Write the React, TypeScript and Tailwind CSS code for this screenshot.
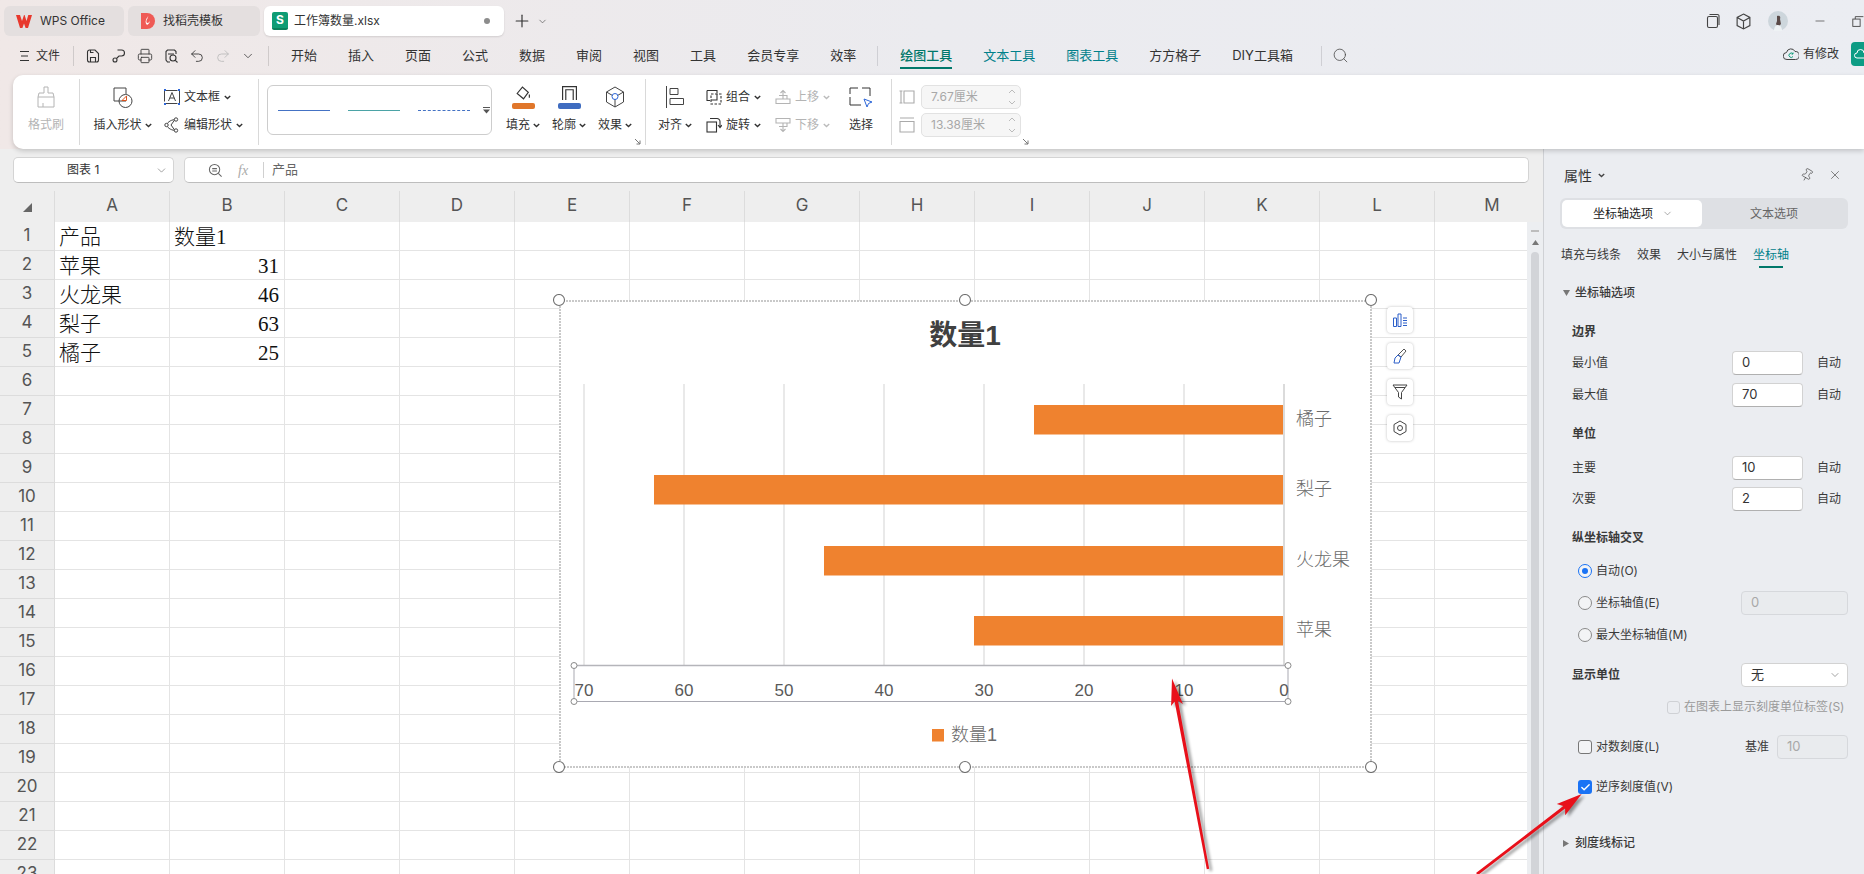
import { Check, ChevronDown, Minus, Pin, Plus, Printer, Redo2, Search, Undo2, X } from "lucide-react";
import type { ReactNode } from "react";

const menus = ["开始", "插入", "页面", "公式", "数据", "审阅", "视图", "工具", "会员专享", "效率"];
const cols = ["A", "B", "C", "D", "E", "F", "G", "H", "I", "J", "K", "L", "M"];
const cells: Record<number, [string, string]> = {
  1: ["产品", "数量1"],
  2: ["苹果", "31"],
  3: ["火龙果", "46"],
  4: ["梨子", "63"],
  5: ["橘子", "25"],
};
const bars = [
  { name: "橘子", value: 25, y: 405 },
  { name: "梨子", value: 63, y: 475 },
  { name: "火龙果", value: 46, y: 546 },
  { name: "苹果", value: 31, y: 616 },
];
const ticks = [70, 60, 50, 40, 30, 20, 10, 0];

function Caret({ className = "text-[#333]" }: { className?: string }) {
  return (
    <svg width="7" height="5" viewBox="0 0 7 5" className={`shrink-0 ${className}`} fill="none" stroke="currentColor" strokeWidth="1.4">
      <path d="M.8 1l2.7 2.6L6.2 1" />
    </svg>
  );
}

function Ico({ children, size = 16, className = "" }: { children: ReactNode; size?: number; className?: string }) {
  return (
    <svg width={size} height={size} viewBox="0 0 16 16" fill="none" stroke="currentColor" strokeWidth="1.1" className={`shrink-0 ${className}`}>
      {children}
    </svg>
  );
}

function Launcher({ className }: { className: string }) {
  return (
    <svg width="7" height="7" viewBox="0 0 7 7" fill="none" stroke="#777" className={`absolute ${className}`}>
      <path d="M1 1l5 5M2.5 6H6V2.5" />
    </svg>
  );
}

function TitleBar() {
  return (
    <div className="flex h-[42px] items-start gap-1 pl-1 pt-[6px] text-[12px] text-[#333]">
      <div className="flex h-[30px] w-[120px] items-center gap-[8px] rounded-[6px] bg-[#e4dfdf] pl-[12px]">
        <svg width="16" height="13" viewBox="0 0 16 13" fill="#e8382d"><path d="M0 0h4l2 6 2-6h.6L10.5 6 12.3 0H16l-4 13H9.6L8 8.4 6.4 13H4z" /></svg>
        <span>WPS Office</span>
      </div>
      <div className="flex h-[30px] w-[132px] items-center gap-[8px] rounded-[6px] bg-[#e4dfdf] pl-[13px]">
        <svg width="14" height="16" viewBox="0 0 14 16"><path d="M0 0h6a8 8 0 0 1 8 8 8 8 0 0 1-8 8H0z" fill="#ef5a55" /><path d="M7 3c1 2-3 4-1 7 2 0 3-2 3-3 0 2-1 4-3 5-1-1-2-3-1-5 0-2 2-2 2-4z" fill="#fff" /></svg>
        <span>找稻壳模板</span>
      </div>
      <div className="flex h-[30px] w-[240px] items-center rounded-[6px] bg-white pl-[8px] shadow-[0_1px_2px_rgba(0,0,0,0.12)]">
        <div className="flex h-[18px] w-[16px] items-center justify-center rounded-[2px] border-b-2 border-[#0b7f5a] bg-[#0e9c74] text-[12px] font-bold text-white">S</div>
        <span className="ml-[6px] flex-1">工作簿数量.xlsx</span>
        <span className="mr-[14px] h-[6px] w-[6px] rounded-full bg-[#8c8c8c]" />
      </div>
      <Plus size={20} strokeWidth={1.4} className="ml-[4px] mt-[5px] text-[#333]" />
      <ChevronDown size={11} strokeWidth={1.5} className="ml-[1px] mt-[10px] text-[#555]" />
      <div className="ml-auto flex h-[30px] items-center pr-0 text-[#444]">
        <Ico size={16}><rect x="2.5" y="3.5" width="10" height="11" rx="1.5" /><path d="M4.5 1.5h8a1.5 1.5 0 0 1 1.5 1.5v9" /></Ico>
        <Ico size={17} className="ml-[14px]"><path d="M8 1l6 3.200v7.600L8 15l-6-3.200V4.200z M2 4.200l6 3.400 6-3.400M8 7.600V15" /></Ico>
        <svg width="20" height="20" viewBox="0 0 20 20" className="ml-[16px]">
          <circle cx="10" cy="10" r="10" fill="#cdd6dc" />
          <path d="M9 5c2-1 4 0 3 3l1 5-3 3-2-3 1-3z" fill="#5a4a48" />
          <path d="M6 20c0-4 2-6 4-6s4 2 4 6z" fill="#eef2f4" />
        </svg>
        <Minus size={14} strokeWidth={1.2} className="ml-[25px]" />
        <Ico size={13} className="ml-[25px] mr-[-1px]"><rect x="1" y="5" width="9" height="9" /><path d="M4 5V2h10" /></Ico>
      </div>
    </div>
  );
}

function MenuBar() {
  return (
    <div className="flex h-[33px] items-start text-[13px] text-[#333]">
      <div className="flex h-[28px] items-center">
        <svg width="9" height="10" viewBox="0 0 9 10" className="ml-[20px]" stroke="#333"><path d="M0 .5h9M1 5h7M0 9.500h9" /></svg>
        <span className="ml-[7px] w-[37px] text-[12px]">文件</span>
        <span className="h-[20px] w-px bg-[#cfcaca]" />
        <div className="ml-[11px] flex items-center gap-[10px] text-[#333]">
          <Ico><path d="M2.500 4a2 2 0 0 1 2-2H10l3.500 3.500V12a2 2 0 0 1-2 2h-7a2 2 0 0 1-2-2z" /><path d="M5.500 14V9.500h5V14M5.500 2v2.500h3" /></Ico>
          <Ico><circle cx="4" cy="12" r="2" /><path d="M5.500 10.500L8 8h2.500a3 3 0 0 0 0-6H6.500" /></Ico>
          <Printer size={16} strokeWidth={1.3} />
          <Ico><path d="M13 6V3.500L11.500 2h-7L3 3.500V12l1.500 2H7" /><circle cx="10" cy="10" r="3" /><path d="M12.300 12.300L14.500 14.500M5 6h6" /></Ico>
          <Undo2 size={16} strokeWidth={1.3} />
          <Redo2 size={16} strokeWidth={1.3} className="text-[#bbb]" />
          <ChevronDown size={14} strokeWidth={1.3} />
        </div>
        <span className="ml-[13px] h-[20px] w-px bg-[#cfcaca]" />
      </div>
      <div className="ml-[22px] flex h-[28px] items-center gap-[31px]">
        {menus.map((m) => <span key={m}>{m}</span>)}
      </div>
      <span className="ml-[21px] mt-[4px] h-[20px] w-px bg-[#cfcfd4]" />
      <div className="ml-[22px] flex h-[28px] items-center gap-[31px]">
        <span className="relative font-medium text-[#00786a]">
          绘图工具
          <span className="absolute left-0 right-0 top-[21px] h-[2px] bg-[#00786a]" />
        </span>
        <span className="text-[#00808a]">文本工具</span>
        <span className="text-[#00808a]">图表工具</span>
        <span>方方格子</span>
        <span>DIY工具箱</span>
      </div>
      <span className="ml-[28px] mt-[4px] h-[20px] w-px bg-[#cfcfd4]" />
      <Search size={17} strokeWidth={1.1} className="ml-[10px] mt-[5px] text-[#444]" />
      <div className="ml-auto flex h-[24px] items-center text-[12px]">
        <svg width="16" height="14" viewBox="0 0 16 14" fill="none" stroke="#444" className="mr-[4px]"><path d="M4 12.500a3.500 3.500 0 0 1-.5-7A4.500 4.500 0 0 1 12 4.500a4 4 0 0 1 .5 8z" /><path d="M10 7a2.200 2.200 0 1 0 0 2.500M10 5.500V7H8.500" stroke="#0f9b78" /></svg>
        <span className="w-[36px] whitespace-nowrap">有修改</span>
        <div className="ml-[12px] h-[24px] w-[13px] rounded-l-[4px] bg-[#0d9c84] pl-[3px] pt-[7px]">
          <svg width="10" height="10" viewBox="0 0 10 10" fill="none" stroke="#fff"><path d="M10 9H3a2.500 2.500 0 0 1 0-5 3.500 3.500 0 0 1 7 0" /></svg>
        </div>
      </div>
    </div>
  );
}

function RibbonSep() {
  return <span className="mt-1 h-[66px] w-px shrink-0 bg-[#d9d9d9]" />;
}

function Tool({ icon, label, muted = false, caret = true }: { icon: ReactNode; label: string; muted?: boolean; caret?: boolean }) {
  return (
    <div className={`flex h-5 items-center ${muted ? "text-[#b4b4b4]" : "text-[#333]"}`}>
      {icon}
      <span className="ml-1 whitespace-nowrap">{label}</span>
      {caret && <Caret className={`ml-[4px] ${muted ? "text-[#bbb]" : "text-[#333]"}`} />}
    </div>
  );
}

function SizeField({ value, icon }: { value: string; icon: ReactNode }) {
  return (
    <div className="flex h-5 items-center">
      {icon}
      <div className="-my-0.5 ml-[6px] flex h-6 w-[100px] items-center justify-between rounded-[5px] border border-[#e2e2e2] bg-[#f6f6f6] pl-[9px] pr-[4px] text-[#a8a8a8]">
        <span>{value}</span>
        <svg width="8" height="18" viewBox="0 0 8 18" fill="none" stroke="#bbb"><path d="M1 5l3-3 3 3M1 13l3 3 3-3" /></svg>
      </div>
    </div>
  );
}

function Ribbon() {
  return (
    <div className="relative z-10 ml-[13px] flex h-[74px] rounded-l-[10px] bg-white text-[12px] shadow-[0_2px_5px_rgba(0,0,0,0.18)]">
      <div className="flex w-[66px] shrink-0 flex-col items-center gap-2 pt-3 text-[#b4b4b4]">
        <div className="flex h-5 items-center">
          <svg width="20" height="22" viewBox="0 0 20 22" fill="none" stroke="#b4b4b4"><path d="M8 1h4v6h5l1 4v10H2V11l1-4h5zM2 11h16M7 21v-4" /></svg>
        </div>
        <span className="flex h-5 items-center">格式刷</span>
      </div>
      <RibbonSep />
      <div className="flex w-[178px] shrink-0 gap-3 pl-[13px] pt-3">
        <div className="flex w-[59px] flex-col items-center gap-2">
          <div className="flex h-5 items-center">
            <svg width="20" height="24" viewBox="0 0 20 24" fill="none" stroke="#444">
              <path d="M13 16H1V3h12v6" /><circle cx="12.500" cy="16" r="6.500" />
              <path d="M9 15.500L13.500 11v4.500z" stroke="#d9541e" fill="#fff" />
            </svg>
          </div>
          <div className="flex h-5 items-center whitespace-nowrap text-[#333]">插入形状<Caret className="ml-[3px] text-[#333]" /></div>
        </div>
        <div className="flex flex-col gap-2">
          <Tool label="文本框" icon={
            <svg width="16" height="16" viewBox="0 0 16 16" fill="none" stroke="#444">
              <rect x=".5" y="1.500" width="15" height="13" strokeDasharray="13 2" />
              <path d="M4.500 12L8 3.500 11.500 12M5.800 9h4.400" />
              <path d="M0 0h2v2H0zM14 0h2v2h-2zM0 14h2v2H0zM14 14h2v2h-2z" fill="#2c66d8" stroke="none" />
            </svg>} />
          <Tool label="编辑形状" icon={
            <svg width="16" height="16" viewBox="0 0 16 16" fill="none" stroke="#444">
              <path d="M11 2.500C6 3 3 6 2.500 8c.5 2 3.500 5 8.500 5.500M11 2.500L7 8l4 5.500" />
              <circle cx="12" cy="2.500" r="1.700" fill="#fff" /><circle cx="2.500" cy="8" r="1.700" fill="#fff" /><circle cx="12" cy="13.500" r="1.700" fill="#fff" />
            </svg>} />
        </div>
      </div>
      <RibbonSep />
      <div className="ml-[8px] mt-[10px] flex h-[50px] w-[225px] shrink-0 items-center rounded-[6px] border border-[#cdcdcd] pl-[10px]">
        <span className="h-px w-[52px] bg-[#4472c4]" />
        <span className="ml-[18px] h-px w-[52px] bg-[#4ba3a6]" />
        <span className="ml-[18px] w-[52px] border-t border-dashed border-[#4472c4]" />
        <svg width="7" height="7" viewBox="0 0 7 7" className="ml-[13px]" fill="#555"><path d="M0 0h7v1H0zM0 2.500h7L3.500 6.500z" /></svg>
      </div>
      <div className="relative ml-[13px] flex w-[140px] shrink-0 gap-[10px] pt-3 text-[#333]">
        <div className="flex w-[36px] flex-col items-center gap-2">
          <div className="flex h-5 flex-col items-center">
            <Ico size={17} className="-mt-[2px]"><path d="M2 8l5-6 5.500 5-4.500 6zM13.500 9v3" /></Ico>
            <span className="mt-[1px] h-[6px] w-[23px] shrink-0 rounded-[2px] bg-[#e0762a]" />
          </div>
          <div className="flex h-5 items-center whitespace-nowrap">填充<Caret className="ml-[3px]" /></div>
        </div>
        <div className="flex w-[36px] flex-col items-center gap-2">
          <div className="flex h-5 flex-col items-center">
            <Ico size={17} className="-mt-[2px]"><path d="M1.500 14V1.500h13V14M4.500 14V4.500h7V14" /></Ico>
            <span className="mt-[1px] h-[6px] w-[23px] shrink-0 rounded-[2px] bg-[#3f6cc0]" />
          </div>
          <div className="flex h-5 items-center whitespace-nowrap">轮廓<Caret className="ml-[3px]" /></div>
        </div>
        <div className="flex w-[36px] flex-col items-center gap-2">
          <div className="flex h-5 items-center">
            <svg width="20" height="22" viewBox="0 0 20 22" fill="none" stroke="#444">
              <path d="M10 1l8.500 5v10L10 21l-8.500-5V6zM1.500 6l6 3.500M18.500 6l-6 3.500M10 13v8" />
              <circle cx="10" cy="10.500" r="3" stroke="#2c66d8" />
            </svg>
          </div>
          <div className="flex h-5 items-center whitespace-nowrap">效果<Caret className="ml-[3px]" /></div>
        </div>
        <Launcher className="bottom-[4px] right-[4px]" />
      </div>
      <RibbonSep />
      <div className="ml-3 flex w-[34px] shrink-0 flex-col items-center gap-2 pt-3 text-[#333]">
        <div className="flex h-5 items-center">
          <svg width="18" height="22" viewBox="0 0 18 22" fill="none" stroke="#444"><path d="M.5 0v22M4 2.500h8v6H4zM4 12.500h13.500v6H4z" /></svg>
        </div>
        <div className="flex h-5 items-center whitespace-nowrap">对齐<Caret className="ml-[3px]" /></div>
      </div>
      <div className="ml-[14px] flex shrink-0 flex-col gap-2 pt-3">
        <Tool label="组合" icon={<Ico><path d="M1 1.500h10v3M1 1.500v10h3" /><rect x="5" y="5" width="10" height="10" strokeDasharray="2.500 1.500" /><path d="M5 11h6V5" /></Ico>} />
        <Tool label="旋转" icon={<Ico><rect x="1" y="5" width="9.500" height="10" /><path d="M4 1.500h7a3 3 0 0 1 3 3V10M12 8l2 2.500L16 8" /></Ico>} />
      </div>
      <div className="ml-[14px] flex shrink-0 flex-col gap-2 pt-3">
        <Tool muted label="上移" icon={<Ico><path d="M8 10V1.500M5.500 4L8 1.500 10.500 4M4 6.500h8v3.500H4M1 10h14v4.500H1z" /></Ico>} />
        <Tool muted label="下移" icon={<Ico><path d="M8 6v8.500M5.500 12L8 14.500 10.500 12M4 9.500h8V6H4M1 6h14V1.500H1z" /></Ico>} />
      </div>
      <div className="ml-[19px] flex w-[24px] shrink-0 flex-col items-center gap-2 pt-3 text-[#333]">
        <div className="flex h-5 items-center">
          <svg width="24" height="22" viewBox="0 0 24 22" fill="none" stroke="#333">
            <path d="M9 2H1v6M13 2h8v8M1 11v8h11" /><path d="M15 13l8 3-3.500 1.500L18 21z" stroke="#2c66d8" fill="#fff" />
          </svg>
        </div>
        <span className="flex h-5 items-center whitespace-nowrap">选择</span>
      </div>
      <span className="ml-[18px] mt-1 h-[66px] w-px shrink-0 bg-[#d9d9d9]" />
      <div className="relative ml-[7px] flex w-[135px] shrink-0 flex-col gap-2 pt-3">
        <SizeField value="7.67厘米" icon={<Ico className="text-[#aaa]"><path d="M.5 2h3M2 2v12M.5 14h3M5 2h10v12H5z" /></Ico>} />
        <SizeField value="13.38厘米" icon={<Ico className="text-[#aaa]"><path d="M1 1h14M1 4.500h14V15H1z" /></Ico>} />
        <Launcher className="bottom-[4px] left-[123px]" />
      </div>
    </div>
  );
}

function Chart() {
  return (
    <svg width="824" height="479" viewBox="553 294 824 479" className="absolute left-[553px] top-[103px] font-['Liberation_Sans','Noto_Sans_CJK_SC',sans-serif]">
      <rect x="560" y="301" width="811" height="466" fill="#fff" stroke="#c9c9c9" strokeWidth="2" strokeDasharray="2 1" />
      <text x="965" y="335" textAnchor="middle" dominantBaseline="central" fontSize="28" fontWeight="700" fill="#404040">数量1</text>
      {ticks.slice(0, 7).map((t) => (
        <line key={t} x1={1284 - t * 10} x2={1284 - t * 10} y1="384" y2="665" stroke="#e2e2e2" strokeWidth="1.500" />
      ))}
      {bars.map((b) => (
        <g key={b.name}>
          <rect x={1284 - b.value * 10} y={b.y} width={b.value * 10 - 1} height="29.500" fill="#ef822f" />
          <text x="1296" y={b.y + 14} dominantBaseline="central" fontSize="18" fontWeight="300" fill="#6b6b6b">{b.name}</text>
        </g>
      ))}
      <line x1="1284" x2="1284" y1="384" y2="665" stroke="#cfcfcf" strokeWidth="1.500" />
      <rect x="574" y="665.500" width="714" height="36" fill="none" stroke="#a9a9b2" />
      <line x1="574" x2="1288" y1="665.500" y2="665.500" stroke="#b5b5ba" strokeWidth="1.500" />
      {ticks.map((t) => (
        <text key={t} x={1284 - t * 10} y="690" textAnchor="middle" dominantBaseline="central" fontSize="17" fill="#595959">{t}</text>
      ))}
      {[[574, 665.5], [1288, 665.5], [574, 701.5], [1288, 701.5]].map(([cx, cy]) => (
        <circle key={`${cx}-${cy}`} cx={cx} cy={cy} r="3" fill="#fff" stroke="#8a8a8a" />
      ))}
      <rect x="932" y="729" width="12" height="12.500" fill="#ef822f" />
      <text x="951" y="735" dominantBaseline="central" fontSize="18" fontWeight="300" fill="#6b6b6b">数量1</text>
      {[559, 965, 1371].flatMap((cx) => [300, 767].map((cy) => (
        <circle key={`${cx}-${cy}`} cx={cx} cy={cy} r="5.500" fill="#fff" stroke="#707070" strokeWidth="1.100" />
      )))}
    </svg>
  );
}

function ChartButtons() {
  const box = "flex h-[26px] w-[26px] items-center justify-center rounded-[4px] bg-white shadow-[0_0_3px_rgba(0,0,0,0.25)]";
  return (
    <div className="absolute left-[1387px] top-[116px] flex flex-col gap-[10px]">
      <div className={box}>
        <svg width="14" height="14" viewBox="0 0 14 14" fill="none" stroke="#2c5fc9"><path d="M.5 5h3v8.500h-3zM5 1h3v12.500H5zM10 5h4M10 7.500h4M10 10h4M10 12.500h4" /></svg>
      </div>
      <div className={box}>
        <svg width="14" height="16" viewBox="0 0 14 16" fill="none" stroke="#2c5fc9"><path d="M11 1l2 2-5 6-3-2z" stroke="#555" /><path d="M5 7l3 2-2 6H1l1-5z" /></svg>
      </div>
      <div className={box}>
        <svg width="16" height="16" viewBox="0 0 16 16" fill="none" stroke="#444"><path d="M1 1h14L9.500 8.500V15L6.500 13V8.500zM3 3.500h10" /></svg>
      </div>
      <div className={box}>
        <svg width="14" height="16" viewBox="0 0 14 16" fill="none" stroke="#444"><path d="M7 1l6 3.500v7L7 15l-6-3.500v-7z" /><circle cx="7" cy="8" r="2.500" /></svg>
      </div>
    </div>
  );
}

function Sheet() {
  return (
    <div className="relative min-h-0 flex-1 overflow-hidden">
      <div className="flex h-[31px] overflow-hidden bg-[#eeeeee] font-['Inter',sans-serif] text-[17px] text-[#555]">
        <div className="flex w-[55px] shrink-0 items-center justify-center border-r border-[#dcdcdc] pt-[2px]">
          <svg width="9" height="9" viewBox="0 0 9 9" fill="#666"><path d="M9 0v9H0z" /></svg>
        </div>
        {cols.map((c) => (
          <div key={c} className="flex w-[115px] shrink-0 items-center justify-center border-r border-[#dcdcdc] pb-[1px]">{c}</div>
        ))}
      </div>
      <div className="flex">
        <div className="min-w-0 flex-1 overflow-hidden">
          {Array.from({ length: 23 }, (_, i) => i + 1).map((r) => (
            <div key={r} className="flex h-[29px]">
              <div className="flex w-[55px] shrink-0 items-center justify-center border-b border-r border-[#dcdcdc] bg-[#eeeeee] font-['Inter',sans-serif] text-[17px] text-[#555]">{r}</div>
              {cols.map((c, i) => {
                const v = cells[r]?.[i];
                const numeric = r > 1 && i === 1;
                return (
                  <div key={c} className={`h-[29px] w-[115px] shrink-0 whitespace-nowrap border-b border-r border-[#e4e4e4] bg-white pt-[1px] font-['Liberation_Serif','Noto_Sans_CJK_SC',serif] text-[21px] font-light leading-[28px] text-[#111] ${numeric ? "pr-[5px] text-right" : "pl-[4px]"}`}>
                    {v}
                  </div>
                );
              })}
            </div>
          ))}
        </div>
        <div className="flex w-[16px] shrink-0 flex-col items-center bg-[#eceef1] pt-[8px]">
          <span className="h-[1.500px] w-[8px] bg-[#bdbdbd]" />
          <svg width="7" height="5" viewBox="0 0 7 5" fill="#777" className="mt-[8px]"><path d="M3.500 0L7 5H0z" /></svg>
          <span className="mt-[7px] h-[700px] w-[8px] rounded-t-[4px] bg-[#d2d4d8]" />
        </div>
      </div>
      <Chart />
      <ChartButtons />
    </div>
  );
}

function Field({ value, disabled = false, className = "w-[71px]" }: { value: string; disabled?: boolean; className?: string }) {
  return (
    <div className={`flex h-[24px] shrink-0 items-center rounded-[4px] border pl-[9px] text-[13px] ${className} ${disabled ? "border-[#d6d8dc] bg-[#e9ebee] text-[#a8a8a8]" : "border-[#d2d2d2] border-b-[#b0b0b0] bg-white text-[#333]"}`}>
      {value}
    </div>
  );
}

function Bound({ label, value, className }: { label: string; value: string; className: string }) {
  return (
    <div className={`ml-[28px] flex h-[24px] items-center ${className}`}>
      <span className="w-[160px] shrink-0">{label}</span>
      <Field value={value} />
      <span className="ml-[14px]">自动</span>
    </div>
  );
}

function Radio({ label, checked = false, children, className }: { label: string; checked?: boolean; children?: ReactNode; className: string }) {
  return (
    <div className={`ml-[34px] flex h-[24px] items-center ${className}`}>
      <span className={`flex h-[14px] w-[14px] shrink-0 items-center justify-center rounded-full border bg-white/40 ${checked ? "border-[#1a73f5]" : "border-[#8a8a8a]"}`}>
        {checked && <span className="h-[6px] w-[6px] rounded-full bg-[#1a73f5]" />}
      </span>
      <span className="ml-[4px] whitespace-nowrap">{label}</span>
      {children}
    </div>
  );
}

function Panel() {
  return (
    <div className="flex w-[321px] shrink-0 flex-col border-l border-[#cfd1d5] bg-[#ebedf1] text-[12px] text-[#3a3a3a]">
      <div className="flex h-[49px] shrink-0 items-center pl-[20px] pr-[22px] pt-[3px]">
        <span className="text-[14px] text-[#333]">属性</span>
        <Caret className="ml-[6px] text-[#444]" />
        <Pin size={14} strokeWidth={1.1} className="ml-auto rotate-[30deg] text-[#444]" />
        <X size={14} strokeWidth={1.1} className="ml-[14px] text-[#444]" />
      </div>
      <div className="ml-[16px] flex h-[31px] w-[288px] shrink-0 rounded-[6px] bg-[#dee0e4] p-[2px]">
        <div className="flex h-[27px] w-[140px] items-center justify-center gap-[9px] rounded-[5px] bg-white pl-[2px] text-[#222]">
          坐标轴选项
          <ChevronDown size={11} strokeWidth={1.2} className="text-[#666]" />
        </div>
        <div className="flex flex-1 items-center justify-center text-[#666]">文本选项</div>
      </div>
      <div className="ml-[17px] flex h-[39px] shrink-0 items-start gap-4 pt-[17px] leading-[18px]">
        <span>填充与线条</span>
        <span>效果</span>
        <span>大小与属性</span>
        <span className="relative text-[#00808a]">
          坐标轴
          <span className="absolute left-[6px] top-[20px] h-[2px] w-[24px] bg-[#00786a]" />
        </span>
      </div>
      <div className="ml-[19px] mt-[16px] flex h-[18px] items-center">
        <svg width="7" height="6" viewBox="0 0 7 6" fill="#777"><path d="M0 0h7L3.500 6z" /></svg>
        <span className="ml-[5px] font-medium">坐标轴选项</span>
      </div>
      <div className="ml-[28px] mt-[21px] h-[18px] font-bold leading-[18px]">边界</div>
      <Bound label="最小值" value="0" className="mt-[10px]" />
      <Bound label="最大值" value="70" className="mt-[8px]" />
      <div className="ml-[28px] mt-[18px] h-[18px] font-bold leading-[18px]">单位</div>
      <Bound label="主要" value="10" className="mt-[13px]" />
      <Bound label="次要" value="2" className="mt-[7px]" />
      <div className="ml-[28px] mt-[18px] h-[18px] font-bold leading-[18px]">纵坐标轴交叉</div>
      <Radio label="自动(O)" checked className="mt-[12px]" />
      <Radio label="坐标轴值(E)" className="mt-[8px]">
        <Field value="0" disabled className="ml-auto mr-[16px] w-[107px]" />
      </Radio>
      <Radio label="最大坐标轴值(M)" className="mt-[8px]" />
      <div className="ml-[28px] mt-[16px] flex h-[24px] items-center pr-[16px]">
        <span className="font-bold">显示单位</span>
        <div className="ml-auto flex h-[24px] w-[107px] items-center justify-between rounded-[4px] border border-[#d2d2d2] bg-white pl-[9px] pr-[6px] text-[13px] text-[#333]">
          无
          <ChevronDown size={12} strokeWidth={1.1} className="text-[#555]" />
        </div>
      </div>
      <div className="ml-[123px] mt-[11px] flex h-[18px] items-center whitespace-nowrap text-[#9a9a9a]">
        <span className="h-[13px] w-[13px] shrink-0 rounded-[3px] border border-[#cfd1d5]" />
        <span className="ml-[4px]">在图表上显示刻度单位标签(S)</span>
      </div>
      <div className="ml-[34px] mt-[19px] flex h-[24px] items-center pr-[16px]">
        <span className="h-[14px] w-[14px] shrink-0 rounded-[3px] border border-[#777] bg-white/40" />
        <span className="ml-[4px]">对数刻度(L)</span>
        <span className="ml-auto">基准</span>
        <Field value="10" disabled className="ml-[8px] w-[71px]" />
      </div>
      <div className="ml-[34px] mt-[16px] flex h-[24px] items-center">
        <span className="flex h-[14px] w-[14px] shrink-0 items-center justify-center rounded-[3px] bg-[#1a73f5]">
          <Check size={11} strokeWidth={3} className="text-white" />
        </span>
        <span className="ml-[4px]">逆序刻度值(V)</span>
      </div>
      <div className="ml-[19px] mt-[35px] flex h-[18px] items-center">
        <svg width="6" height="7" viewBox="0 0 6 7" fill="#777"><path d="M0 0l6 3.500L0 7z" /></svg>
        <span className="ml-[6px] font-medium">刻度线标记</span>
      </div>
    </div>
  );
}

function Arrows() {
  const one = "1172,678.500 1182.900,703.900 1178,700.800 1209.200,868.800 1206.800,869.200 1174.600,701.400 1171.100,706.100";
  const two = "1581.700,794 1565.200,815.300 1565.100,808.500 1478,875 1476,873 1563.300,806.100 1556.800,804.100";
  return (
    <svg width="1864" height="874" viewBox="0 0 1864 874" className="pointer-events-none absolute left-0 top-0 z-20">
      <defs>
        <filter id="soft" x="-20%" y="-20%" width="140%" height="140%"><feGaussianBlur stdDeviation="1.500" /></filter>
      </defs>
      <g fill="#000" opacity="0.4" filter="url(#soft)" transform="translate(3 2)">
        <polygon points={one} />
        <polygon points={two} />
      </g>
      <g fill="#e8101a">
        <polygon points={one} />
        <polygon points={two} />
      </g>
    </svg>
  );
}

export default function App() {
  return (
    <div className="relative flex h-[874px] w-[1864px] flex-col overflow-hidden bg-[#eeeeee] font-['Inter','Noto_Sans_CJK_SC',sans-serif]">
      <div className="shrink-0 bg-linear-to-r from-[#f0e8e7] via-[#ebebef] to-[#ebedf2]">
        <TitleBar />
        <MenuBar />
        <Ribbon />
      </div>
      <div className="flex min-h-0 flex-1">
        <div className="flex w-[1543px] shrink-0 flex-col">
          <div className="flex h-[42px] shrink-0 gap-[10px] pl-[13px] pt-[8px] text-[12px] text-[#333]">
            <div className="flex h-[26px] w-[161px] items-center rounded-[5px] border border-[#d4d4d4] border-b-[#bdbdbd] bg-white pl-[53px]">
              图表 1
              <ChevronDown size={13} strokeWidth={1.1} className="ml-auto mr-[5px] text-[#666]" />
            </div>
            <div className="flex h-[26px] w-[1345px] items-center rounded-[5px] border border-[#d4d4d4] border-b-[#bdbdbd] bg-white pl-[23px] text-[#666]">
              <Ico size={15}><circle cx="7" cy="7" r="5.500" /><path d="M4.500 6h5M4.500 8.500h5M11 11l3.500 3.500" /></Ico>
              <span className="ml-[15px] w-[25px] font-['Liberation_Serif',serif] text-[14px] italic text-[#aaa]">fx</span>
              <span className="h-[16px] w-px bg-[#d0d0d0]" />
              <span className="ml-[8px] text-[13px]">产品</span>
            </div>
          </div>
          <Sheet />
        </div>
        <Panel />
      </div>
      <Arrows />
    </div>
  );
}
